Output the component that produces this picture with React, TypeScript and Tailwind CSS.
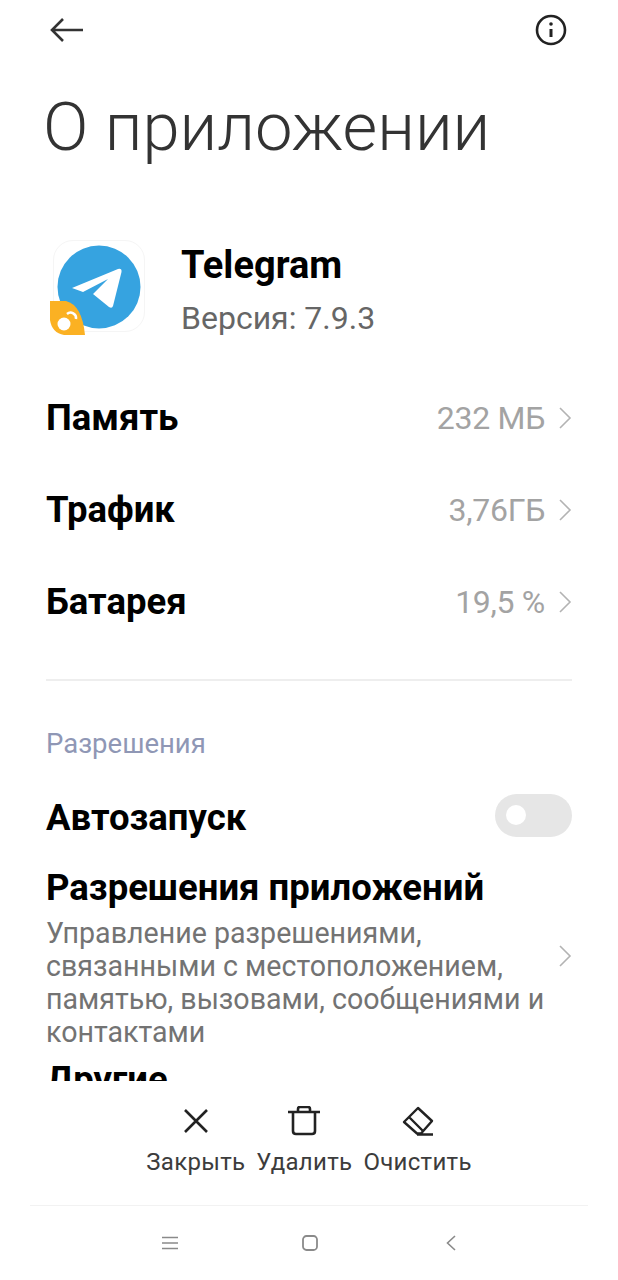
function Chevron({ className = '' }: { className?: string }) {
  return (
    <svg width="14" height="24" viewBox="0 0 14 24" fill="none" stroke="#b3b3b3" strokeWidth="1.6" className={className}>
      <path d="M2 2 L12 12 L2 22" />
    </svg>
  );
}

function InfoRow({ label, value }: { label: string; value: string }) {
  return (
    <div className="flex items-center justify-between h-[92px]">
      <span className="text-[36.5px] font-bold text-black">{label}</span>
      <span className="flex items-center gap-[13px] text-[32px] tracking-[-0.3px] text-[#a3a3a3]">
        {value}
        <Chevron />
      </span>
    </div>
  );
}

function TelegramIcon() {
  return (
    <div className="relative w-[92px] h-[92px] ml-[7px] rounded-[20px] border border-[#f5f5f5] flex items-center justify-center">
      <svg width="84" height="84" viewBox="0 0 84 84" className="mt-[2px]">
        <circle cx="42" cy="42" r="41.5" fill="#36a3e0" />
        <path d="M15 43 L61 24 Q65 23 64.5 27 L56 61 Q55 64 52 62 L36 49 L51 34 L26 47 Z" fill="#fff" />
      </svg>
      <svg width="36" height="36" viewBox="0 0 36 36" className="absolute left-[-4px] bottom-[-5px]">
        <path d="M0 1 L16 1 Q32 5 35 35 L14 35 Q2 33 0 20 Z" fill="#fbb123" />
        <circle cx="14" cy="24" r="6.5" fill="#fff" />
        <path d="M17 14 a5.5 5.5 0 0 1 9 5" fill="none" stroke="#fff" strokeWidth="2.5" />
      </svg>
    </div>
  );
}

function BottomAction({ label, children }: { label: string; children: React.ReactNode }) {
  return (
    <div className="flex flex-col items-center gap-[11px]">
      <div className="h-[32px] flex items-center justify-center">{children}</div>
      <span className="text-[24px] leading-[28px] text-[#3c3c3c] tracking-[0.3px]">{label}</span>
    </div>
  );
}

export default function App() {
  return (
    <div className="w-[618px] h-[1280px] bg-white flex flex-col overflow-hidden font-['Roboto',sans-serif]">
      <div className="h-[1081px] overflow-hidden">
        <div className="flex items-center justify-between pl-[50px] pr-[51px] pt-[14px]">
          <svg width="34" height="26" viewBox="0 0 34 26" fill="none" stroke="#333" strokeWidth="2.6">
            <path d="M33 13 H2 M13 2 L2 13 L13 24" />
          </svg>
          <svg width="32" height="32" viewBox="0 0 32 32" fill="none" stroke="#222" strokeWidth="2.6">
            <circle cx="16" cy="16" r="14" />
            <path d="M16 15 V23" strokeWidth="3" />
            <circle cx="16" cy="10" r="1.8" fill="#222" stroke="none" />
          </svg>
        </div>
        <h1 className="ml-[43px] mt-[41px] text-[67px] leading-[80px] font-light text-[#333]">О приложении</h1>

        <div className="flex items-start mt-[73px] ml-[46px]">
          <TelegramIcon />
          <div className="ml-[36px] mt-[3px]">
            <div className="text-[38px] leading-[44px] font-bold text-black">Telegram</div>
            <div className="text-[32px] leading-[36px] mt-[13px] text-[#666]">Версия: 7.9.3</div>
          </div>
        </div>

        <div className="mx-[46px] mt-[36px]">
          <InfoRow label="Память" value="232 МБ" />
          <InfoRow label="Трафик" value="3,76ГБ" />
          <InfoRow label="Батарея" value="19,5 %" />
          <div className="h-[2px] bg-[#eeeeee] mt-[31px]" />
          <div className="mt-[47px] text-[27.5px] leading-[32px] text-[#8f97b5]">Разрешения</div>

          <div className="flex items-center justify-between mt-[34px] h-[44px]">
            <span className="pt-[4px] text-[36.5px] font-bold text-black">Автозапуск</span>
            <div className="w-[77px] h-[43px] mb-[2px] rounded-full bg-[#e6e6e6] flex items-center pl-[11px]">
              <div className="w-[20px] h-[20px] rounded-full bg-white" />
            </div>
          </div>

          <div className="mt-[30px] text-[36.5px] leading-[40px] font-bold text-black">Разрешения приложений</div>
          <div className="flex items-start justify-between mt-[9px]">
            <div className="w-[510px] text-[28.6px] leading-[33px] text-[#737373]">
              Управление разрешениями, связанными с местоположением, памятью, вызовами, сообщениями и контактами
            </div>
            <Chevron className="mt-[27px]" />
          </div>
          <div className="mt-[11px] text-[36.5px] leading-[40px] font-bold text-black">Другие</div>
        </div>
      </div>

      <div className="flex justify-center gap-[11px] pt-[24px]">
        <BottomAction label="Закрыть">
          <svg width="28" height="28" viewBox="0 0 28 28" stroke="#222" strokeWidth="2.6" fill="none">
            <path d="M3 3 L25 25 M25 3 L3 25" />
          </svg>
        </BottomAction>
        <BottomAction label="Удалить">
          <svg width="32" height="30" viewBox="0 0 32 30" stroke="#222" strokeWidth="2.6" fill="none">
            <path d="M0 6 H32 M10 6 V3 Q10 1 12 1 H20 Q22 1 22 3 V6 M5 6 V25 Q5 28 8 28 H24 Q27 28 27 25 V6" />
          </svg>
        </BottomAction>
        <BottomAction label="Очистить">
          <svg width="32" height="30" viewBox="0 0 32 30" stroke="#222" strokeWidth="2.4" fill="none" strokeLinejoin="round">
            <path d="M16 2 L30 15 L19 27.5 H15 L2 16 Z M7 11 L21 25 M15 28.5 H31" />
          </svg>
        </BottomAction>
      </div>

      <div className="mx-[30px] mt-[29px] h-[1px] bg-[#f2f2f2]" />

      <div className="flex items-center pl-[162px] mt-[29px]">
        <svg width="16" height="14" viewBox="0 0 16 14" stroke="#8a8a8a" strokeWidth="1.6">
          <path d="M0 1.5 H16 M0 7 H16 M0 12.5 H16" />
        </svg>
        <svg width="16" height="16" viewBox="0 0 16 16" stroke="#8a8a8a" strokeWidth="1.8" fill="none" className="ml-[124px]">
          <rect x="1" y="1" width="14" height="14" rx="3.5" />
        </svg>
        <svg width="10" height="16" viewBox="0 0 10 16" stroke="#8a8a8a" strokeWidth="1.6" fill="none" className="ml-[128px]">
          <path d="M9 1 L1.5 8 L9 15" />
        </svg>
      </div>
    </div>
  );
}
